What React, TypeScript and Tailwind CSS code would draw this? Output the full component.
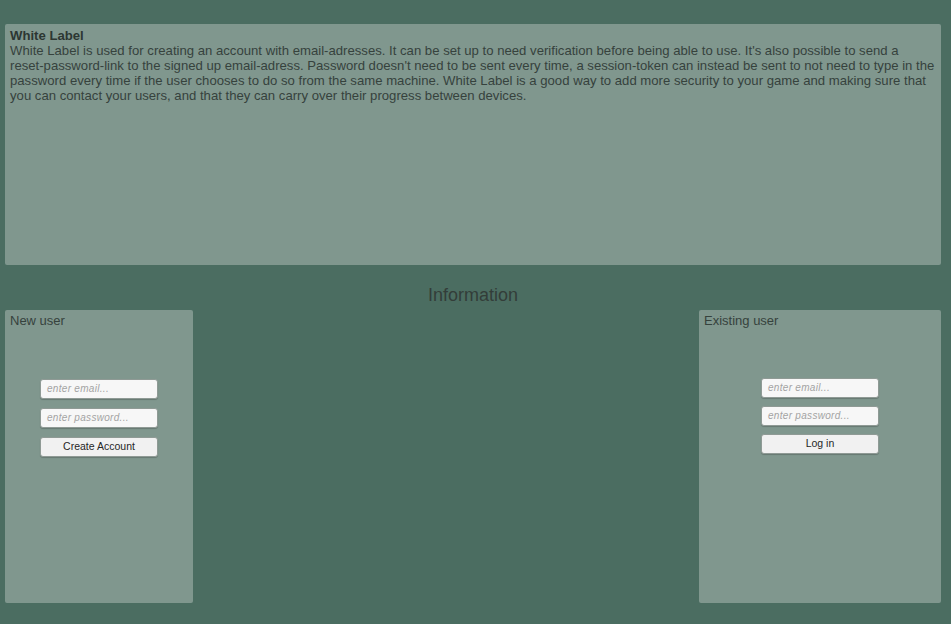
import React from "react";

const font = { fontFamily: '"Liberation Sans", Arial, sans-serif' };

function Field({ placeholder }: { placeholder: string }) {
  return (
    <div className="h-[20px] w-[118px] rounded-[3px] border border-[#8f9a95] bg-[#f7f7f7] pl-[6px] text-[10px] italic leading-[18px] tracking-[0.3px] text-[#a3a3a3] shadow-[0_1px_1px_rgba(0,0,0,0.2)]">
      {placeholder}
    </div>
  );
}

function Btn({ label }: { label: string }) {
  return (
    <div className="flex h-[20px] w-[118px] items-center justify-center rounded-[3px] border border-[#8f9a95] bg-[#f1f1f1] text-[10.5px] text-[#262626] shadow-[0_1px_1px_rgba(0,0,0,0.2)]">
      {label}
    </div>
  );
}

export default function App() {
  return (
    <div className="flex h-[624px] w-[951px] flex-col bg-[#4b6d61] text-[#36423d]" style={font}>
      <div className="ml-[5px] mr-[10px] mt-[24px] h-[241px] rounded-[2px] bg-[#80978e] pl-[5px] pr-[6px] pt-[4px] text-[13.15px] leading-[15px]">
        <div className="font-bold text-[#2c3632]">White Label</div>
        <div>
          White Label is used for creating an account with email-adresses. It can be set up to need verification before being able to use. It's also possible to send a reset-password-link to the signed up email-adress. Password doesn't need to be sent every time, a session-token can instead be sent to not need to type in the password every time if the user chooses to do so from the same machine. White Label is a good way to add more security to your game and making sure that you can contact your users, and that they can carry over their progress between devices.
        </div>
      </div>
      <div className="flex h-[45px] items-end justify-center pb-[5px] pr-[5px] text-[18px] leading-[20px] text-[#333d39]">
        Information
      </div>
      <div className="ml-[5px] mr-[10px] flex justify-between">
        <div className="h-[293px] w-[188px] rounded-[2px] bg-[#80978e] pl-[5px] pt-[3px]">
          <div className="text-[13px] leading-[15px]">New user</div>
          <div className="ml-[30px] mt-[51px] flex flex-col gap-[9px]">
            <Field placeholder="enter email..." />
            <Field placeholder="enter password..." />
            <Btn label="Create Account" />
          </div>
        </div>
        <div className="h-[293px] w-[242px] rounded-[2px] bg-[#80978e] pl-[5px] pt-[3px]">
          <div className="text-[13px] leading-[15px]">Existing user</div>
          <div className="ml-[57px] mt-[50px] flex flex-col gap-[8px]">
            <Field placeholder="enter email..." />
            <Field placeholder="enter password..." />
            <Btn label="Log in" />
          </div>
        </div>
      </div>
    </div>
  );
}
